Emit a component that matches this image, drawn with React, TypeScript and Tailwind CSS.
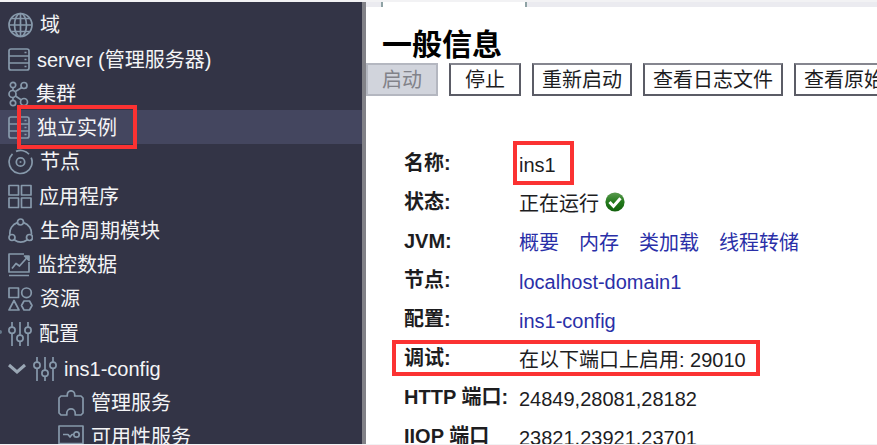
import React from 'react';

interface TreeItem {
  label: string;
  icon: React.ReactNode;
  level?: number;
  open?: boolean;
  partial?: boolean;
  active?: boolean;
}

interface IconProps {
  width: number;
  children: React.ReactNode;
}

const Icon: React.FC<IconProps> = ({ width, children }) => (
  <svg
    width={width}
    height={26}
    viewBox={`0 0 ${width} 26`}
    fill="none"
    stroke="currentColor"
    strokeWidth={1.7}
    strokeLinejoin="round"
    className="shrink-0 text-[#8799ab]"
    aria-hidden="true"
  >
    {children}
  </svg>
);

const GlobeIcon = () => (
  <Icon width={25}>
    <circle cx="12.5" cy="13" r="11.5" />
    <ellipse cx="12.5" cy="13" rx="6" ry="11.5" />
    <path d="M12.5 1.5v23M1 13h23M3.3 6.5h18.4M3.3 19.5h18.4" />
  </Icon>
);

const ServerIcon = () => (
  <Icon width={22}>
    <rect x="1" y="2" width="20" height="21" rx="2" />
    <path d="M1 9h20M1 16h20M16.5 5.500h2M16.5 12.500h2M16.5 19.500h2" />
  </Icon>
);

const ClusterIcon = () => (
  <Icon width={21}>
    <circle cx="5" cy="4" r="2.7" />
    <circle cx="16" cy="4.5" r="3" />
    <circle cx="4.5" cy="13" r="3.5" />
    <circle cx="5" cy="22" r="2.7" />
    <circle cx="16" cy="21" r="3.5" />
    <path d="M5 6.7v2.8M5 16.5v2.8M7.5 10.5l6.3-4M7.5 15l5.8 4" />
  </Icon>
);

const NodeIcon = () => (
  <Icon width={25}>
    <path d="M8 2.4A11.5 11.5 0 0 1 21 5.2M23.2 8.6A11.5 11.5 0 1 1 4.5 4.8" />
    <circle cx="12.5" cy="13" r="4.2" />
    <path d="M12.5 12.2v1.6" />
  </Icon>
);

const AppsIcon = () => (
  <Icon width={24}>
    <rect x="1" y="1.5" width="9.5" height="9.5" />
    <rect x="13.5" y="1.5" width="9.5" height="9.5" />
    <rect x="1" y="14" width="9.5" height="9.5" />
    <rect x="13.5" y="14" width="9.5" height="9.5" />
  </Icon>
);

const LifecycleIcon = () => (
  <Icon width={25}>
    <circle cx="12.5" cy="4" r="3" />
    <circle cx="4" cy="19.5" r="3" />
    <circle cx="21.5" cy="19.5" r="3" />
    <path d="M9.3 4.6A11 11 0 0 0 2 16.8M15.7 4.6A11 11 0 0 1 23.3 16.8M6.5 22A11 11 0 0 0 19 22" />
  </Icon>
);

const MonitorIcon = () => (
  <Icon width={22}>
    <path d="M16 2H1v18h20V10M1 23.5h20" />
    <path d="M4 16.5l4-5 3.5 2.5L20 4.5" />
    <path d="M16.5 4H21v4.5z" fill="currentColor" />
  </Icon>
);

const ResourceIcon = () => (
  <Icon width={25}>
    <rect x="1" y="2" width="9.5" height="9.5" />
    <circle cx="18.5" cy="6.8" r="4.8" />
    <path d="M6 14.5L11 24H1zM16 15h5.5l2.5 4.5-2.5 4.5H16l-2.5-4.5z" />
  </Icon>
);

const ConfigIcon = () => (
  <Icon width={24}>
    <path d="M4 1v5M4 12.5V25M12 1v13M12 20.5V25M20 1v5M20 12.5V25" />
    <circle cx="4" cy="9.2" r="3.1" />
    <circle cx="12" cy="17.2" r="3.1" />
    <circle cx="20" cy="9.2" r="3.1" />
  </Icon>
);

const PuzzleIcon = () => (
  <Icon width={26}>
    <path d="M3 6h6.3V4.500a3.7 3.7 0 0 1 7.4 0V6H23l2 2v15l-2 2h-5.8v-2a4.2 4.2 0 0 0-8.4 0v2H3l-2-2V8z" />
  </Icon>
);

const AvailabilityIcon = () => (
  <Icon width={26}>
    <path d="M1 2h24v17.500H1zM10 19.500V25M16 19.500V25M6 24h14M5 10.500h5l2 2.500 2-2.500h1.500" />
    <circle cx="18.500" cy="10.500" r="2.700" />
  </Icon>
);

// Groups are set apart by a hairline gap
const treeGroups: TreeItem[][] = [
  [{ label: '域', icon: <GlobeIcon /> }],
  [
    { label: 'server (管理服务器)', icon: <ServerIcon /> },
    { label: '集群', icon: <ClusterIcon /> },
    { label: '独立实例', icon: <ServerIcon />, active: true },
    { label: '节点', icon: <NodeIcon /> },
  ],
  [
    { label: '应用程序', icon: <AppsIcon /> },
    { label: '生命周期模块', icon: <LifecycleIcon /> },
    { label: '监控数据', icon: <MonitorIcon /> },
    { label: '资源', icon: <ResourceIcon /> },
  ],
  [{ label: '配置', icon: <ConfigIcon />, partial: true }],
  [
    { label: 'ins1-config', icon: <ConfigIcon />, level: 1, open: true },
    { label: '管理服务', icon: <PuzzleIcon />, level: 2 },
    { label: '可用性服务', icon: <AvailabilityIcon />, level: 2 },
  ],
];

const Highlight = ({ className }: { className: string }) => (
  <span className={`pointer-events-none absolute z-10 border-4 border-[#fb3232] ${className}`} />
);

const TreeRow = ({ item }: { item: TreeItem }) => (
  <li className={`relative ${item.active ? 'bg-[#44465f]' : ''}`}>
    <a
      href="#"
      className={`flex h-[34px] items-center gap-[7px] pt-0.5 whitespace-nowrap text-[#f4f4f6] ${item.level === 2 ? 'pl-[58px]' : 'pl-2'}`}
    >
      {item.open && (
        <svg width="18" height="12" viewBox="0 0 18 12" fill="none" stroke="#9aa7b5" strokeWidth="3" aria-hidden="true">
          <path d="M1 2l8 7 8-7" />
        </svg>
      )}
      {item.icon}
      <span>{item.label}</span>
    </a>
    {item.partial && <span className="absolute top-3.5 left-0 h-1 w-0.5 rounded-r bg-[#66788a]" />}
    {item.active && <Highlight className="-top-[5px] left-[17px] h-11 w-[120px]" />}
  </li>
);

const actions = [
  { label: '启动', disabled: true },
  { label: '停止' },
  { label: '重新启动' },
  { label: '查看日志文件' },
  { label: '查看原始日志' },
];

const SuccessIcon = () => (
  <svg width="20" height="20" viewBox="0 0 20 20" role="img" aria-label="正在运行">
    <defs>
      <linearGradient id="ok" x1="0" y1="0" x2="0" y2="1">
        <stop offset="0" stopColor="#5c9a50" />
        <stop offset="0.5" stopColor="#237a1b" />
        <stop offset="1" stopColor="#12600d" />
      </linearGradient>
    </defs>
    <circle cx="10" cy="10" r="9.6" fill="url(#ok)" />
    <path d="M4.5 10l4 4.3 7-8" fill="none" stroke="#fff" strokeWidth="3" />
  </svg>
);

const Link = ({ children }: { children: React.ReactNode }) => (
  <a href="#" className="text-[#2a2fa8]">
    {children}
  </a>
);

const details: { label: string; value: React.ReactNode; mark?: string }[] = [
  { label: '名称:', value: 'ins1', mark: '-top-0.5 left-[147px] h-11 w-[61px]' },
  {
    label: '状态:',
    value: (
      <span className="flex gap-1.5">
        正在运行 <SuccessIcon />
      </span>
    ),
  },
  {
    label: 'JVM:',
    value: (
      <span className="flex gap-5">
        <Link>概要</Link>
        <Link>内存</Link>
        <Link>类加载</Link>
        <Link>线程转储</Link>
      </span>
    ),
  },
  { label: '节点:', value: <Link>localhost-domain1</Link> },
  { label: '配置:', value: <Link>ins1-config</Link> },
  { label: '调试:', value: '在以下端口上启用: 29010', mark: 'top-0.5 left-[26px] h-9 w-[368px]' },
  { label: 'HTTP 端口:', value: '24849,28081,28182' },
  { label: 'IIOP 端口', value: '23821,23921,23701' },
];

export default function App() {
  return (
    <div className="flex h-screen overflow-hidden border-t-2 border-b border-[#f2f2f4] bg-white font-['Liberation_Sans','Noto_Sans_CJK_SC',sans-serif] text-[20px] leading-6">
      <nav className="w-[362px] shrink-0 overflow-hidden bg-[#333446] pt-[5px]">
        <div className="flex flex-col gap-px">
          {treeGroups.map((group, idx) => (
            <ul key={idx}>
              {group.map((item) => (
                <TreeRow key={item.label} item={item} />
              ))}
            </ul>
          ))}
        </div>
      </nav>

      <main className="min-w-0 flex-1 overflow-hidden border-l-4 border-[#818187] text-[#1d1d1f]">
        {/* Bottom edge of the tab bar */}
        <div className="flex h-[5px] bg-[#ebebf0]">
          <div className="ml-[15px] w-[146px] border-x-2 border-[#8fa3a5] bg-white" />
        </div>

        <h1 className="mt-5 pl-4 text-[30px] leading-9 font-bold text-black">一般信息</h1>

        <div className="flex gap-[11px]">
          {actions.map((action) => (
            <button
              key={action.label}
              disabled={action.disabled}
              className="h-[33px] min-w-[72px] shrink-0 border-2 border-[#5b5c66] border-t-[#85868f] bg-white px-2 whitespace-nowrap disabled:border-[#b4b7c0] disabled:bg-[#d1d4dc] disabled:text-[#818289]"
            >
              {action.label}
            </button>
          ))}
        </div>

        <dl className="mt-[47px]">
          {details.map((row) => (
            <div key={row.label} className="relative flex h-[39px] pl-[38px] whitespace-nowrap">
              <dt className="w-[115px] shrink-0 pt-2 font-bold">{row.label}</dt>
              <dd className="pt-2.5">{row.value}</dd>
              {row.mark && <Highlight className={row.mark} />}
            </div>
          ))}
        </dl>
      </main>
    </div>
  );
}
